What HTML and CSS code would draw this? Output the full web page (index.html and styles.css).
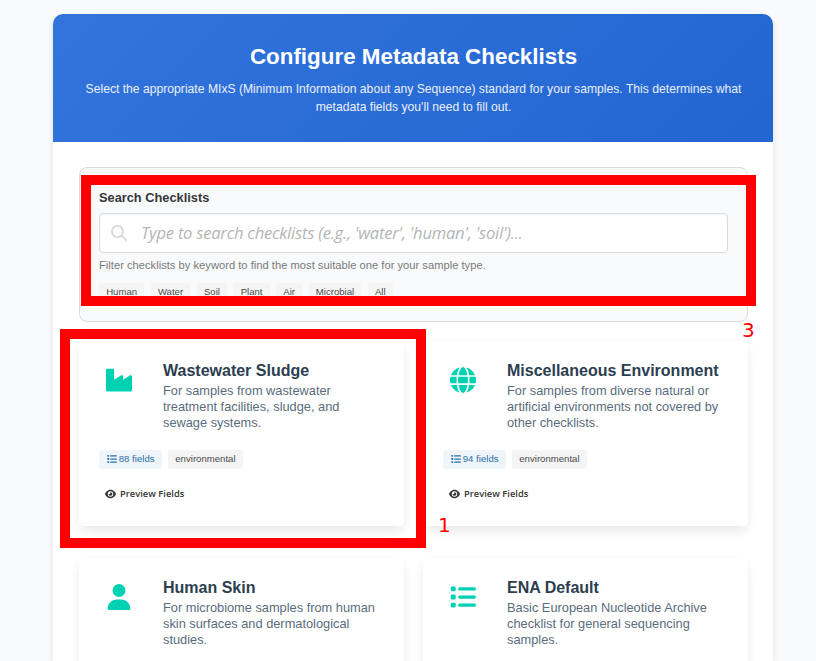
FILE: index.html
```html
<!DOCTYPE html>
<html lang="en">
<head>
<meta charset="utf-8">
<title>Configure Metadata Checklists</title>
<link rel="stylesheet" href="styles.css">
</head>
<body>
<svg class="defs" aria-hidden="true">
  <symbol id="industry" viewBox="0 0 512 512"><path d="M475.115 163.781L336 252.309v-68.28c0-18.916-20.931-30.399-36.885-20.248L160 252.309V56c0-13.255-10.745-24-24-24H24C10.745 32 0 42.745 0 56v400c0 13.255 10.745 24 24 24h464c13.255 0 24-10.745 24-24V184.029c0-18.917-20.931-30.399-36.885-20.248z"/></symbol>
  <symbol id="globe" viewBox="0 0 512 512"><path d="M352 256c0 22.2-1.2 43.6-3.3 64H163.3c-2.2-20.4-3.3-41.8-3.3-64s1.2-43.6 3.3-64H348.7c2.2 20.4 3.3 41.8 3.3 64zm28.8-64H503.9c5.3 20.5 8.1 41.9 8.1 64s-2.8 43.5-8.1 64H380.8c2.1-20.6 3.2-42 3.2-64s-1.1-43.4-3.2-64zm112.6-32H376.7c-10-63.9-29.8-117.4-55.3-151.6c78.3 20.7 142 77.5 171.9 151.6zm-149.1 0H167.7c6.1-36.4 15.5-68.6 27-94.7c10.5-23.6 22.2-40.7 33.5-51.5C239.4 3.2 248.7 0 256 0s16.6 3.2 27.8 13.8c11.3 10.8 23 27.9 33.5 51.5c11.6 26 20.9 58.2 27 94.7zm-209 0H18.6C48.6 85.9 112.2 29.1 190.6 8.4C165.1 42.6 145.3 96.1 135.3 160zM8.1 192H131.2c-2.1 20.6-3.2 42-3.2 64s1.1 43.4 3.2 64H8.1C2.8 299.5 0 278.1 0 256s2.8-43.5 8.1-64zM194.7 446.6c-11.6-26-20.9-58.2-27-94.6H344.3c-6.1 36.4-15.5 68.6-27 94.6c-10.5 23.6-22.2 40.7-33.5 51.5C272.6 508.8 263.3 512 256 512s-16.6-3.2-27.8-13.8c-11.3-10.8-23-27.9-33.5-51.5zM135.3 352c10 63.9 29.8 117.4 55.3 151.6C112.2 482.9 48.6 426.1 18.6 352H135.3zm358.1 0c-30 74.1-93.6 130.9-171.9 151.6c25.5-34.2 45.2-87.7 55.3-151.6H493.4z"/></symbol>
  <symbol id="user" viewBox="-32 0 512 512"><path d="M224 256A128 128 0 1 0 224 0a128 128 0 1 0 0 256zm-45.7 48C79.8 304 0 383.8 0 482.3C0 498.7 13.3 512 29.7 512H418.3c16.4 0 29.7-13.3 29.7-29.7C448 383.8 368.2 304 269.7 304H178.3z"/></symbol>
  <symbol id="list" viewBox="0 0 512 512"><rect x="16" y="48" width="96" height="96" rx="24"/><rect x="16" y="208" width="96" height="96" rx="24"/><rect x="16" y="368" width="96" height="96" rx="24"/><rect x="160" y="64" width="352" height="64" rx="32"/><rect x="160" y="224" width="352" height="64" rx="32"/><rect x="160" y="384" width="352" height="64" rx="32"/></symbol>
  <symbol id="eye" viewBox="0 0 576 512"><path d="M288 32c-80.8 0-145.5 36.8-192.6 80.6C48.6 156 17.3 208 2.5 243.7c-3.3 7.9-3.3 16.7 0 24.6C17.3 304 48.6 356 95.4 399.4C142.5 443.2 207.2 480 288 480s145.5-36.8 192.6-80.6c46.8-43.5 78.1-95.4 93-131.1c3.3-7.9 3.3-16.7 0-24.6c-14.9-35.7-46.2-87.7-93-131.1C433.5 68.8 368.8 32 288 32zM144 256a144 144 0 1 1 288 0 144 144 0 1 1 -288 0zm144-64c0 35.3-28.7 64-64 64c-7.1 0-13.9-1.2-20.3-3.3c-5.5-1.8-11.9 1.6-11.7 7.4c.3 6.9 1.3 13.8 3.2 20.7c13.7 51.2 66.4 81.6 117.6 67.9s81.6-66.4 67.9-117.6c-11.1-41.5-47.8-69.4-88.6-71.1c-5.8-.2-9.2 6.1-7.4 11.7c2.1 6.4 3.3 13.2 3.3 20.3z"/></symbol>
  <symbol id="search" viewBox="0 0 512 512"><path d="M416 208c0 45.9-14.9 88.3-40 122.7L502.6 457.4c12.5 12.5 12.5 32.8 0 45.3s-32.8 12.5-45.3 0L330.7 376c-34.4 25.2-76.8 40-122.7 40C93.1 416 0 322.9 0 208S93.1 0 208 0S416 93.1 416 208zM208 352a144 144 0 1 0 0-288 144 144 0 1 0 0 288z"/></symbol>
</svg>
<main class="panel">
  <header class="hero">
    <h1>Configure Metadata Checklists</h1>
    <p>Select the appropriate MIxS (Minimum Information about any Sequence) standard for your samples. This determines what metadata fields you'll need to fill out.</p>
  </header>
  <div class="content">
    <section class="search">
      <label for="q">Search Checklists</label>
      <div class="field">
        <svg><use href="#search"/></svg>
        <input id="q" type="text" placeholder="Type to search checklists (e.g., 'water', 'human', 'soil')...">
      </div>
      <p class="help">Filter checklists by keyword to find the most suitable one for your sample type.</p>
      <div class="tags">
        <span class="tag">Human</span><span class="tag">Water</span><span class="tag">Soil</span><span class="tag">Plant</span><span class="tag">Air</span><span class="tag">Microbial</span><span class="tag">All</span>
      </div>
    </section>
    <section class="cards">
      <article class="card">
        <div class="top"><svg class="icon"><use href="#industry"/></svg>
          <div><h2>Wastewater Sludge</h2><p>For samples from wastewater treatment facilities, sludge, and sewage systems.</p></div></div>
        <div class="tags"><span class="tag info"><svg><use href="#list"/></svg>88 fields</span><span class="tag">environmental</span></div>
        <a class="preview"><svg><use href="#eye"/></svg>Preview Fields</a>
      </article>
      <article class="card">
        <div class="top"><svg class="icon"><use href="#globe"/></svg>
          <div><h2>Miscellaneous Environment</h2><p>For samples from diverse natural or artificial environments not covered by other checklists.</p></div></div>
        <div class="tags"><span class="tag info"><svg><use href="#list"/></svg>94 fields</span><span class="tag">environmental</span></div>
        <a class="preview"><svg><use href="#eye"/></svg>Preview Fields</a>
      </article>
      <article class="card">
        <div class="top"><svg class="icon"><use href="#user"/></svg>
          <div><h2>Human Skin</h2><p>For microbiome samples from human skin surfaces and dermatological studies.</p></div></div>
      </article>
      <article class="card">
        <div class="top"><svg class="icon"><use href="#list"/></svg>
          <div><h2>ENA Default</h2><p>Basic European Nucleotide Archive checklist for general sequencing samples.</p></div></div>
      </article>
    </section>
  </div>
</main>
<div class="mark mark-search"></div>
<div class="mark mark-card"></div>
<span class="num num-search">3</span>
<span class="num num-card">1</span>
</body>
</html>
```
FILE: styles.css
```css
* { box-sizing: border-box; margin: 0; padding: 0; }
html, body { height: 661px; overflow: hidden; }
body { position: relative; padding: 14px 43px 0 53px; background: #f8fafc; font-family: "Liberation Sans", Arial, sans-serif; }
svg { fill: currentColor; flex: none; }
.defs { display: none; }

.panel { width: 720px; height: 647px; border-radius: 10px 10px 0 0; background: #fff; overflow: hidden; box-shadow: 0 2px 6px rgba(10, 10, 10, .1); }
.hero { height: 128px; padding: 30px 29.5px 0 30.5px; text-align: center; color: #fff; background: linear-gradient(135deg, #3273dc, #2366d1); }
.hero h1 { font-size: 22.4px; line-height: 25px; }
.hero p { margin-top: 11px; font-size: 12.16px; line-height: 18px; opacity: .9; }
.content { padding: 25px 25px 0 26px; }

.search { height: 155px; padding: 22px 19px 0; border: 1px solid #dbdbdb; border-radius: 8px; background: #f8fafc; }
.search label { display: block; font-size: 12.8px; line-height: 16px; font-weight: 700; color: #363636; }
.field { display: flex; align-items: center; height: 40px; margin-top: 7px; padding: 0 11px; border: 1px solid #dbdbdb; border-radius: 4px; background: #fff; box-shadow: inset 0 1px 2px rgba(10, 10, 10, .05); }
.field svg { width: 16px; height: 16px; color: #dbdbdb; }
.field input { flex: 1; margin-left: 14px; padding-bottom: 2px; border: 0; outline: 0; background: none; font: italic 16.6px "Open Sans", "Noto Sans", sans-serif; letter-spacing: -.24px; }
.field input::placeholder { color: #b5b5b5; }
.help { margin-top: 4px; font-size: 11.2px; line-height: 16px; color: #7a7a7a; }
.search .tags { margin-top: 10px; }

.tags { display: flex; gap: 6.4px; }
.tag { display: flex; align-items: center; height: 19px; padding: 0 7.2px 2px; border-radius: 3px; background: #f5f5f5; color: #4a4a4a; font-size: 9.6px; line-height: 14px; white-space: nowrap; }
.info { background: #eff5fb; color: #296fa8; }
.info svg { width: 10px; height: 10px; margin: 1px 2px 0 .6px; }

.cards { display: grid; grid-template-columns: 325px 325px; column-gap: 19px; row-gap: 32px; margin-top: 19px; }
.card { height: 185px; padding: 20px; border-radius: 4px; background: #fff; box-shadow: 0 6px 13px -2px rgba(10, 10, 10, .1), 0 0 1px rgba(10, 10, 10, .05); }
.top { display: flex; height: 89px; }
.icon { width: 26px; height: 26px; margin: 6px 31.5px 0 6.5px; color: #00d1b2; }
.card h2 { font-size: 16px; line-height: 20px; color: #2c3e50; white-space: nowrap; }
.card p { width: 216px; margin-top: 2px; font-size: 12.8px; line-height: 16px; color: #5a6c7d; }
.preview { display: flex; align-items: center; height: 14px; margin: 18px 0 0 6px; color: #363636; font: 600 9.4px/14px "Open Sans", "Noto Sans", sans-serif; }
.preview svg { width: 11px; height: 10px; margin-right: 4px; }

.mark { position: absolute; border: 10px solid #f00; }
.mark-search { left: 81px; top: 175px; width: 675px; height: 131px; }
.mark-card { left: 60px; top: 329px; width: 366px; height: 219px; }
.num { position: absolute; color: #f00; font: 20px/24px "DejaVu Sans", sans-serif; }
.num-search { left: 742px; top: 318px; }
.num-card { left: 438px; top: 513px; }
```
